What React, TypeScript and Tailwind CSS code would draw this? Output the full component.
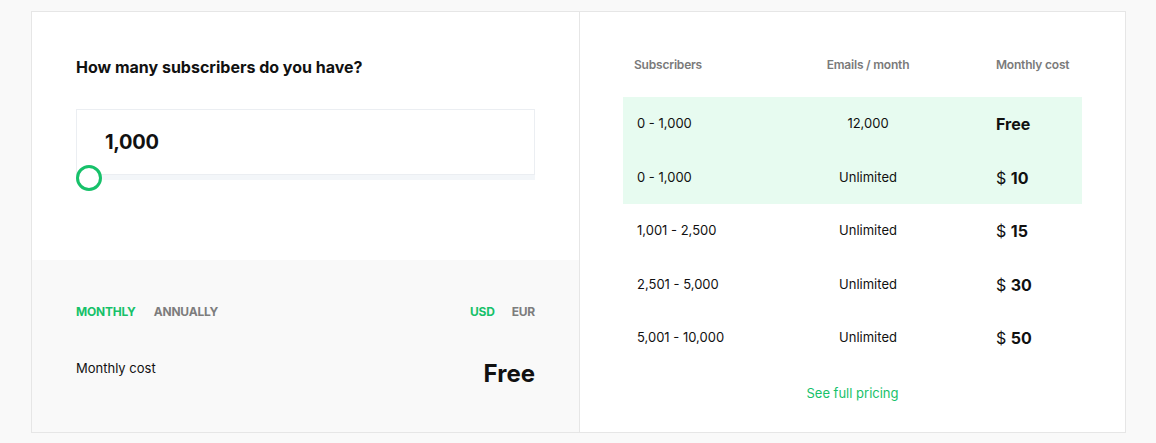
const rows = [
  { subs: '0 - 1,000', emails: '12,000', cost: 'Free', active: true },
  { subs: '0 - 1,000', emails: 'Unlimited', cost: '10', active: true },
  { subs: '1,001 - 2,500', emails: 'Unlimited', cost: '15', active: false },
  { subs: '2,501 - 5,000', emails: 'Unlimited', cost: '30', active: false },
  { subs: '5,001 - 10,000', emails: 'Unlimited', cost: '50', active: false },
]

function Calculator() {
  return (
    <div className="flex w-[548px] flex-col border-r border-[#e6e6e6]">
      <div className="h-[248px] bg-white px-[44px] pt-[45px]">
        <h2 className="text-[16px] font-bold leading-5 text-[#111]">
          How many subscribers do you have?
        </h2>
        <div className="relative mt-[32px]">
          <div className="flex h-[66px] items-center border border-[#ebeef2] bg-white pl-[28px]">
            <span className="text-[20px] font-bold tracking-[-0.3px] text-[#111]">1,000</span>
          </div>
          <div className="h-[5px] bg-[#f3f6f9]" />
          <div className="absolute left-0 top-[56px] h-[26px] w-[26px] rounded-full border-[3px] border-[#17c16a] bg-white" />
        </div>
      </div>
      <div className="flex-1 bg-[#f9f9f9] px-[44px] pt-[44px]">
        <div className="flex items-center justify-between text-[12px] font-bold leading-4 tracking-[-0.2px]">
          <div className="flex gap-[18px]">
            <span className="text-[#17c16a]">MONTHLY</span>
            <span className="text-[#7d7d7d]">ANNUALLY</span>
          </div>
          <div className="flex gap-[17px]">
            <span className="text-[#17c16a]">USD</span>
            <span className="text-[#7d7d7d]">EUR</span>
          </div>
        </div>
        <div className="mt-[40px] flex items-start justify-between">
          <span className="text-[13px] leading-4 text-[#111]">Monthly cost</span>
          <span className="-mt-[2px] text-[24px] font-bold leading-8 text-[#111]">Free</span>
        </div>
      </div>
    </div>
  )
}

function PriceTable() {
  return (
    <div className="flex flex-1 flex-col bg-white px-[43px] pt-[45px]">
      <div className="grid h-[40px] grid-cols-[174px_142px_1fr] items-start text-[12px] font-semibold leading-4 text-[#7a7a7a] tracking-[-0.2px]">
        <span className="pl-[11px]">Subscribers</span>
        <span className="text-center">Emails / month</span>
        <span className="pl-[57px]">Monthly cost</span>
      </div>
      <div>
        {rows.map((r, i) => (
          <div
            key={i}
            className={`grid h-[53.5px] grid-cols-[174px_142px_1fr] items-center text-[13px] text-[#111] ${r.active ? 'bg-[#e7fbf0]' : ''}`}
          >
            <span className="pl-[14px]">{r.subs}</span>
            <span className="text-center">{r.emails}</span>
            <span className="pl-[57px] pt-[1px]">
              {r.cost === 'Free' ? (
                <span className="text-[16px] font-bold">Free</span>
              ) : (
                <>
                  <span className="text-[16px]">$ </span>
                  <span className="text-[16px] font-bold">{r.cost}</span>
                </>
              )}
            </span>
          </div>
        ))}
      </div>
      <div className="mt-[20px] text-center text-[13px] leading-4 text-[#17c16a]">
        <a href="#">See full pricing</a>
      </div>
    </div>
  )
}

export default function App() {
  return (
    <div className="min-h-[443px] bg-[#f9f9f9] pl-[31px] pr-[30px] pt-[11px] font-['Inter','Liberation_Sans',sans-serif]">
      <div className="flex h-[422px] border border-[#e6e6e6] bg-white">
        <Calculator />
        <PriceTable />
      </div>
    </div>
  )
}
